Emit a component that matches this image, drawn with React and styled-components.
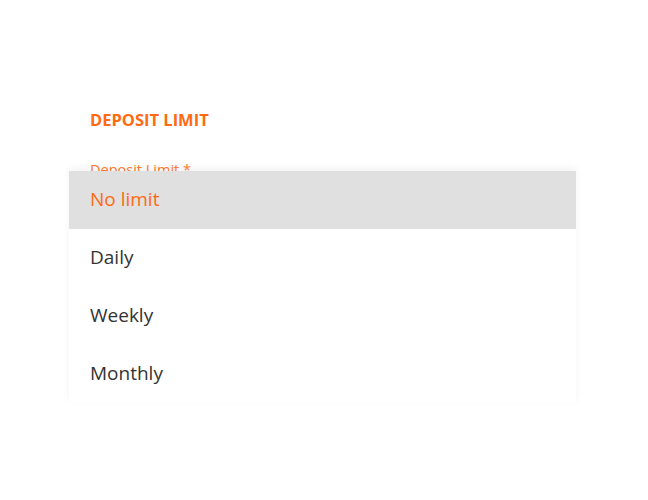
import React from "react";
import styled, { createGlobalStyle } from "styled-components";

const Global = createGlobalStyle`
  html, body { margin: 0; padding: 0; background: #fff; }
  body { font-family: "Open Sans", "Noto Sans", sans-serif; }
`;

const Page = styled.div`
  width: 648px;
  height: 500px;
  box-sizing: border-box;
  padding: 109px 72px 0 69px;
`;

const Title = styled.h2`
  margin: 0 0 0 21px;
  font-size: 16.5px;
  font-weight: 700;
  color: #ff6a13;
  line-height: 22px;
  text-transform: uppercase;
`;

const Field = styled.div`
  position: relative;
  margin-top: 29px;
  height: 60px;
`;

const Label = styled.label`
  display: block;
  margin-left: 21px;
  font-size: 14.5px;
  line-height: 20px;
  color: #ff7a30;
`;

const Menu = styled.ul`
  position: absolute;
  left: 0;
  right: 0;
  top: 11px;
  margin: 0;
  padding: 0;
  list-style: none;
  background: #fff;
  box-shadow: 0 -3px 8px rgba(0, 0, 0, 0.05);
  z-index: 2;
`;

const Item = styled.li`
  display: flex;
  align-items: center;
  height: 58px;
  padding: 0 0 2px 21px;
  box-sizing: border-box;
  font-size: 19px;
  color: ${(p) => (p.$active ? "#ff6a13" : "#333333")};
  background: ${(p) => (p.$active ? "#e0e0e0" : "#ffffff")};
`;

const options = ["No limit", "Daily", "Weekly", "Monthly"];

export default function App() {
  return (
    <>
      <Global />
      <Page>
        <Title>Deposit Limit</Title>
        <Field>
          <Label>Deposit Limit *</Label>
          <Menu>
            {options.map((o, i) => (
              <Item key={o} $active={i === 0}>
                {o}
              </Item>
            ))}
          </Menu>
        </Field>
      </Page>
    </>
  );
}
